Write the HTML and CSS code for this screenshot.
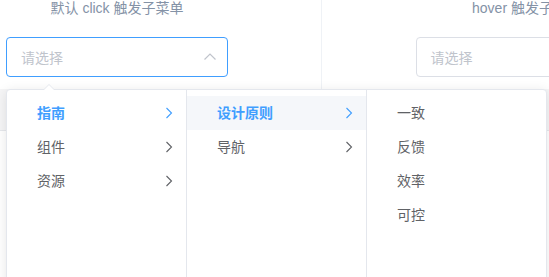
FILE: index.html
```html
<!DOCTYPE html>
<html lang="zh-CN">
<head>
<meta charset="utf-8">
<link rel="stylesheet" href="styles.css">
</head>
<body>
<div class="page">
  <div class="demo">
    <div class="block first">
      <span class="title">默认 click 触发子菜单</span>
      <div class="cascader focused">
        <span class="ph">请选择</span>
        <svg class="suffix" width="14" height="14" viewBox="0 0 14 14"><polyline points="1.5,9.5 7,4 12.5,9.5" fill="none" stroke="#c0c4cc" stroke-width="1.2"/></svg>
      </div>
    </div>
    <div class="block">
      <span class="title">hover 触发子菜单</span>
      <div class="cascader">
        <span class="ph">请选择</span>
        <svg class="suffix" width="14" height="14" viewBox="0 0 14 14"><polyline points="1.5,4.5 7,10 12.5,4.5" fill="none" stroke="#c0c4cc" stroke-width="1.2"/></svg>
      </div>
    </div>
  </div>
  <div class="meta"></div>
  <div class="code"></div>

  <div class="popper">
    <span class="arrow"></span>
    <div class="menus">
      <ul class="menu">
        <li class="node active"><span class="label">指南</span><svg class="chev" width="14" height="14" viewBox="0 0 14 14"><polyline points="4.5,2 9.5,7 4.5,12" fill="none" stroke="currentColor" stroke-width="1.1"/></svg></li>
        <li class="node"><span class="label">组件</span><svg class="chev" width="14" height="14" viewBox="0 0 14 14"><polyline points="4.5,2 9.5,7 4.5,12" fill="none" stroke="currentColor" stroke-width="1.1"/></svg></li>
        <li class="node"><span class="label">资源</span><svg class="chev" width="14" height="14" viewBox="0 0 14 14"><polyline points="4.5,2 9.5,7 4.5,12" fill="none" stroke="currentColor" stroke-width="1.1"/></svg></li>
      </ul>
      <ul class="menu">
        <li class="node active hover"><span class="label">设计原则</span><svg class="chev" width="14" height="14" viewBox="0 0 14 14"><polyline points="4.5,2 9.5,7 4.5,12" fill="none" stroke="currentColor" stroke-width="1.1"/></svg></li>
        <li class="node"><span class="label">导航</span><svg class="chev" width="14" height="14" viewBox="0 0 14 14"><polyline points="4.5,2 9.5,7 4.5,12" fill="none" stroke="currentColor" stroke-width="1.1"/></svg></li>
      </ul>
      <ul class="menu last">
        <li class="node"><span class="label">一致</span></li>
        <li class="node"><span class="label">反馈</span></li>
        <li class="node"><span class="label">效率</span></li>
        <li class="node"><span class="label">可控</span></li>
      </ul>
    </div>
  </div>
</div>
</body>
</html>
```
FILE: styles.css
```css
* { box-sizing: border-box; }
html, body { margin: 0; padding: 0; background: #fff; }
body {
  font-family: "Liberation Sans", "Noto Sans CJK SC", sans-serif;
  font-size: 14px;
}
.page {
  position: relative;
  width: 549px;
  height: 277px;
  overflow: hidden;
}
.demo {
  display: flex;
  margin-left: -87px;
  height: 89px;
}
.block {
  flex: none;
  width: 409px;
  text-align: center;
}
.block.first { border-right: 1px solid #eff2f6; }
.title {
  display: block;
  color: #8492a6;
  font-size: 14px;
  line-height: 16px;
  margin-bottom: 21px;
}
.cascader {
  display: inline-flex;
  align-items: center;
  justify-content: space-between;
  width: 222px;
  height: 40px;
  padding: 0 10px 0 14px;
  border: 1px solid #dcdfe6;
  border-radius: 4px;
  background: #fff;
  text-align: left;
}
.cascader.focused { border-color: #409eff; }
.ph { color: #c0c4cc; font-size: 14px; }
.suffix { display: block; }
.meta {
  height: 42px;
  background: #f5f5f6;
  border-bottom: 1px solid #e6e8ec;
}
.code { height: 146px; }

.popper {
  position: absolute;
  top: 89px;
  left: 6px;
  width: 541px;
  border: 1px solid #e4e7ed;
  border-radius: 4px;
  background: #fff;
  box-shadow: 0 2px 12px 0 rgba(0, 0, 0, 0.1);
}
.arrow {
  position: absolute;
  top: -6px;
  left: 36px;
  width: 0;
  height: 0;
  border-left: 6px solid transparent;
  border-right: 6px solid transparent;
  border-bottom: 6px solid #e4e7ed;
}
.arrow::after {
  content: "";
  position: absolute;
  left: -5px;
  top: 1px;
  border-left: 5px solid transparent;
  border-right: 5px solid transparent;
  border-bottom: 5px solid #fff;
}
.menus { display: flex; }
.menu {
  list-style: none;
  margin: 0;
  padding: 6px 0;
  width: 180px;
  height: 204px;
  border-right: 1px solid #e4e7ed;
}
.menu.last { border-right: none; width: 179px; }
.node {
  position: relative;
  display: flex;
  align-items: center;
  height: 34px;
  padding: 0 30px 0 20px;
  color: #606266;
  font-size: 14px;
}
.label { padding: 0 10px; line-height: 34px; }
.node.active { color: #409eff; font-weight: 700; }
.node.hover { background: #f5f7fa; }
.chev {
  position: absolute;
  right: 10px;
  top: 10px;
  color: #606266;
}
.node.active .chev { color: #409eff; }
```
